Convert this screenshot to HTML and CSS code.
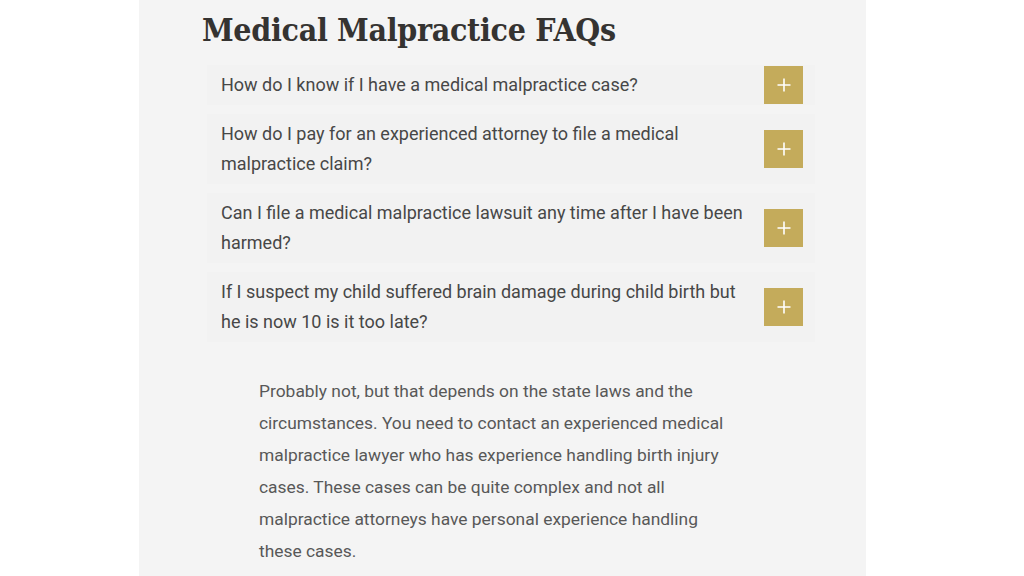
FILE: index.html
```html
<!DOCTYPE html>
<html lang="en">
<head>
<meta charset="utf-8">
<title>Medical Malpractice FAQs</title>
<link rel="stylesheet" href="styles.css">
</head>
<body>
<main class="panel">
  <h2 class="title">Medical Malpractice FAQs</h2>
  <div class="faq">
    <div class="row">
      <p class="q">How do I know if I have a medical malpractice case?</p>
      <span class="btn"><svg width="14" height="14" viewBox="0 0 14 14"><path d="M7 0.5V13.5M0.5 7H13.5" stroke="#fff" stroke-width="1.6"/></svg></span>
    </div>
    <div class="row">
      <p class="q">How do I pay for an experienced attorney to file a medical malpractice claim?</p>
      <span class="btn"><svg width="14" height="14" viewBox="0 0 14 14"><path d="M7 0.5V13.5M0.5 7H13.5" stroke="#fff" stroke-width="1.6"/></svg></span>
    </div>
    <div class="row">
      <p class="q">Can I file a medical malpractice lawsuit any time after I have been harmed?</p>
      <span class="btn"><svg width="14" height="14" viewBox="0 0 14 14"><path d="M7 0.5V13.5M0.5 7H13.5" stroke="#fff" stroke-width="1.6"/></svg></span>
    </div>
    <div class="row">
      <p class="q">If I suspect my child suffered brain damage during child birth but he is now 10 is it too late?</p>
      <span class="btn"><svg width="14" height="14" viewBox="0 0 14 14"><path d="M7 0.5V13.5M0.5 7H13.5" stroke="#fff" stroke-width="1.6"/></svg></span>
    </div>
    <p class="answer">Probably not, but that depends on the state laws and the circumstances. You need to contact an experienced medical malpractice lawyer who has experience handling birth injury cases. These cases can be quite complex and not all malpractice attorneys have personal experience handling these cases.</p>
  </div>
</main>
</body>
</html>
```

FILE: styles.css
```css
html, body {
  margin: 0;
  padding: 0;
  background: #ffffff;
  height: 100%;
  overflow: hidden;
}
body {
  padding-left: 139px;
}
.panel {
  width: 727px;
  height: 576px;
  background: #f4f4f4;
  box-sizing: border-box;
  padding: 10px 0 0 63px;
}
.title {
  margin: 0 0 15px 0;
  font-family: "DejaVu Serif", serif;
  font-stretch: condensed;
  font-weight: bold;
  font-size: 31.8px;
  line-height: 40px;
  color: #353331;
  letter-spacing: -0.3px;
}
.faq {
  margin-left: 5px;
  width: 608px;
  display: flex;
  flex-direction: column;
  gap: 9px;
}
.row {
  display: flex;
  align-items: center;
  justify-content: space-between;
  background: #f2f2f2;
  padding: 0 12px 0 14px;
}
.q {
  margin: 0;
  padding: 5px 0;
  width: 525px;
  font-family: Roboto, "Liberation Sans", sans-serif;
  font-size: 18px;
  line-height: 30px;
  color: #474747;
}
.btn {
  width: 39px;
  height: 38px;
  background: #c4ab5b;
  display: flex;
  align-items: center;
  justify-content: center;
  flex: none;
}
.answer {
  margin: 24px 0 0 52px;
  width: 480px;
  font-family: Roboto, "Liberation Sans", sans-serif;
  font-size: 17.4px;
  line-height: 32px;
  color: #585858;
}
```
